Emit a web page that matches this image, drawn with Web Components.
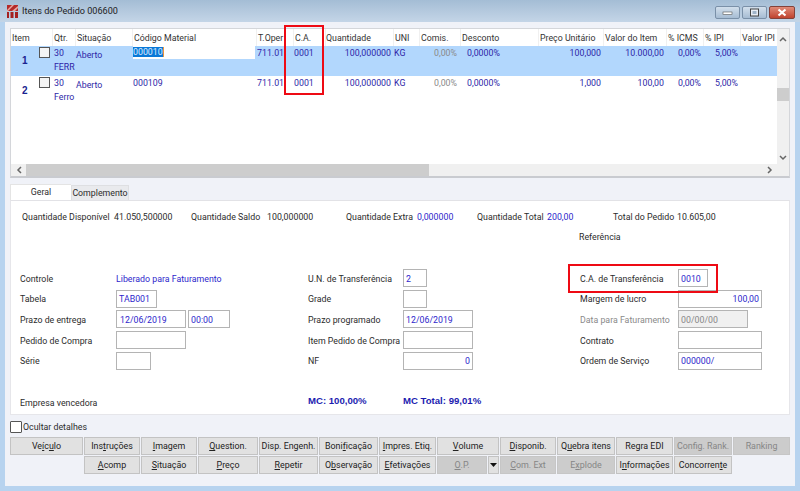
<!DOCTYPE html>
<html lang="pt"><head><meta charset="utf-8"><title>Itens do Pedido</title>
<style>
html,body{margin:0;padding:0;width:800px;height:491px;overflow:hidden}
body{font:8.8px Roboto,"Liberation Sans",Arial,sans-serif;color:#2c2c2c}
</style></head><body>
<erp-window>
  <erp-grid slot="grid"></erp-grid>
  <erp-form slot="form"></erp-form>
  <erp-buttons slot="buttons"></erp-buttons>
</erp-window>
<script>
const FONT='Roboto,"Liberation Sans",Arial,sans-serif';
const BOLD='"Liberation Sans",Arial,sans-serif';
class ErpWindow extends HTMLElement{constructor(){super();this.attachShadow({mode:'open'}).innerHTML=`
<style>
:host{display:flex;flex-direction:column;position:relative;width:800px;height:491px;box-sizing:border-box;background:#b7d3ef;font:8.8px ${FONT};color:#2c2c2c}
.title{height:22px;flex:none;display:flex;align-items:center;padding:0 5px 0 7px;background:linear-gradient(#a4bdd5,#c4d5e7);font-size:9.1px;color:#222;gap:4px}
.title svg{flex:none}
.title span{flex:1}
.wb{display:flex;gap:2px;align-self:flex-start;margin-top:6px}
.wb i{display:flex;align-items:center;justify-content:center;width:25px;height:13px;box-sizing:border-box;border:1px solid #7a90a8;border-radius:2px;background:linear-gradient(#d2dfec,#a6bcd3)}
.wb i.x{width:26px;background:linear-gradient(#e08a78,#c0432f);border-color:#84423a}
.body{flex:1;margin:0 5px 5px;background:#f0f2f8;display:flex;flex-direction:column;padding:6px 5px 0 5px;min-height:0}
.tabs{display:flex;margin-top:6px;height:16px;align-items:flex-end;flex:none}
.tab{box-sizing:border-box;display:flex;align-items:center;justify-content:center}
.t1{width:61px;height:16px;background:#fff;padding-bottom:2px;border-top:1px solid #e4e4e4;border-left:1px solid #e4e4e4}
.t2{width:58px;height:15px;background:#e9eaed;border:1px solid #dedfe2;border-bottom:0}
.check{display:flex;align-items:center;gap:1px;margin-top:6px;height:12px;flex:none}
.check b{width:10px;height:10px;border:1px solid #555;background:#fff;display:block;border-radius:1px}
.red{position:absolute;border:2.5px solid #ee0a14;box-sizing:border-box}
</style>
<div class="title">
<svg width="11" height="13" viewBox="0 0 11 13"><rect width="11" height="6" fill="#b32a2a"/><path d="M0 5 5 0h2L0 7zM5 6l6-5v2L8 6z" fill="#e9a8a0"/><rect x="0" y="7" width="2" height="6" fill="#a52020"/><rect x="3.5" y="7" width="3" height="6" fill="#a52020"/><rect x="8" y="7" width="3" height="6" fill="#a52020"/></svg>
<span>Itens do Pedido 006600</span>
<div class="wb">
<i><svg width="11" height="5"><rect x="1" y="2" width="9" height="2.5" fill="#fff" stroke="#555" stroke-width=".6"/></svg></i>
<i><svg width="11" height="9"><rect x="1.5" y="1" width="8" height="7" fill="#e8eef5" stroke="#444" stroke-width="1"/><rect x="3.5" y="3" width="4" height="3" fill="#9fb4c9"/></svg></i>
<i class="x"><svg width="10" height="9"><path d="M1.5 1.5 8.500 7.500M8.500 1.500 1.500 7.500" stroke="#fff" stroke-width="2.200"/></svg></i>
</div></div>
<div class="body">
<slot name="grid"></slot>
<div class="tabs"><div class="tab t1">Geral</div><div class="tab t2">Complemento</div></div>
<slot name="form"></slot>
<div class="check"><b></b><span>Ocultar detalhes</span></div>
<slot name="buttons"></slot>
</div>
<div class="red" style="left:284px;top:25px;width:40px;height:70px"></div>
<div class="red" style="left:568px;top:264px;width:150px;height:29px"></div>`}}
customElements.define('erp-window',ErpWindow);

const COLS='41px 23px 57px 124px 37px 32px 68px 26px 41px 78px 65px 63px 37px 37px 38px';
class ErpGrid extends HTMLElement{constructor(){super();
const heads=['Item','Qtr.','Situação','Código Material','T.Oper','C.A.','Quantidade','UNI','Comis.','Desconto','Preço Unitário','Valor do Item','% ICMS','% IPI','Valor IPI'];
const row=(sel,n,cod,fam,pu,vi)=>`<div class="row ${sel?'sel':''}">
<div class="c nr"><strong>${n}</strong><i class="cb"></i></div>
<div class="c q"><span>30</span><span class="fam">${fam}</span></div>
<div class="c sit">Aberto</div>
<div class="c cod">${sel?`<span class="edit"><mark>${cod}</mark></span>`:cod}</div>
<div class="c">711.01</div><div class="c">0001</div><div class="c r">100,000000</div><div class="c">KG</div>
<div class="c r gr">0,00%</div><div class="c r2">0,0000%</div><div class="c r">${pu}</div><div class="c r">${vi}</div>
<div class="c r">0,00%</div><div class="c r">5,00%</div><div class="c"></div></div>`;
this.attachShadow({mode:'open'}).innerHTML=`
<style>
:host{display:block;height:150px;flex:none;box-sizing:border-box;background:#fff;border:1px solid #d4d6da;border-bottom:2px solid #c9cbd0;font:8.8px ${FONT}}
.wrap{display:grid;grid-template-columns:1fr 12px;grid-template-rows:1fr 12px;height:100%}
.main{overflow:hidden}
.head,.row{display:grid;grid-template-columns:${COLS}}
.head{height:17px;align-items:center;color:#333}
.head div{padding-left:1px;border-left:1px solid #f0f0f0;height:17px;line-height:19px;white-space:nowrap;overflow:hidden}
.head div:first-child{border:0}
.head div:nth-child(7){padding-left:0}
.row{height:30px;color:#2e1fa8}
.row.sel{background:#b2d7fd}
.c{padding:1px 0 0 1px;white-space:nowrap;position:relative;line-height:12px}
.r{text-align:right;padding-right:2px}
.r2{padding-left:7px}
.gr{color:#8a8a8a;padding-right:3px}
.nr strong{position:absolute;left:11px;top:9px;color:#1a2390;font:bold 10px ${BOLD}}
.cb{position:absolute;left:28px;top:1px;width:9px;height:9px;border:1px solid #555;background:#f4f4f4;display:block}
.q{padding-left:2px;overflow:visible}
.q span{display:block}
.fam{margin-top:2px}
.sit{padding-top:3px;margin-left:0}
.cod{padding-left:1px;padding-top:0}
.edit{display:block;background:#fff;margin-right:1px;height:13px;line-height:13px}
mark{background:#0a78d7;color:#dcecff;box-shadow:1px 0 0 #e8963c}
.row:not(.sel) .cod{padding-top:1px}
.sb{background:#f0f0f0;display:flex;color:#555;position:relative}
.v{flex-direction:column;align-items:center}
.h{align-items:center}
.ar{flex:none;display:flex;align-items:center;justify-content:center}
.v .ar{height:13px;width:12px}.h .ar{width:15px;height:12px}
.thumb{background:#cdcdcd}
.v .thumb{height:13px;width:100%}
.fill{flex:1}
.h .thumb{width:403px;height:100%}
.corner{background:#f0f0f0}
svg{display:block}
</style>
<div class="wrap"><div class="main">
<div class="head">${heads.map(h=>`<div>${h}</div>`).join('')}</div>
${row(1,1,'000010','FERR','100,000','10.000,00')}
${row(0,2,'000109','Ferro','1,000','100,00')}
</div>
<div class="sb v"><div class="ar" style="margin-top:3px"><svg width="8" height="6"><path d="M1 5 4 2l3 3" fill="none" stroke="#666" stroke-width="1.500"/></svg></div><div style="height:43px"></div><div class="thumb"></div><div class="fill"></div><div class="ar"><svg width="8" height="6"><path d="M1 1l3 3 3-3" fill="none" stroke="#666" stroke-width="1.500"/></svg></div></div>
<div class="sb h"><div class="ar"><svg width="6" height="8"><path d="M5 1 2 4l3 3" fill="none" stroke="#666" stroke-width="1.500"/></svg></div><div class="thumb"></div><div class="fill"></div><div class="ar"><svg width="6" height="8"><path d="M1 1l3 3-3 3" fill="none" stroke="#666" stroke-width="1.500"/></svg></div></div>
<div class="corner"></div>
</div>`}}
customElements.define('erp-grid',ErpGrid);

class ErpInput extends HTMLElement{constructor(){super();this.attachShadow({mode:'open'}).innerHTML=`
<style>:host{display:flex;align-items:center;box-sizing:border-box;height:18px;border:1px solid #b4b4b4;background:#fff;padding:1px 2px 0 2px;color:#2e1fcc;white-space:nowrap;overflow:hidden}
:host([right]){justify-content:flex-end}:host([off]){background:#f0f0f0;color:#888}</style><slot></slot>`}}
customElements.define('erp-input',ErpInput);

class ErpForm extends HTMLElement{constructor(){super();this.attachShadow({mode:'open'}).innerHTML=`
<style>
:host{display:block;height:215px;flex:none;box-sizing:border-box;background:#fff;border:1px solid #e6e6ea;border-top:1px solid #e2e2e6;font:8.8px ${FONT};color:#2c2c2c;padding:9px 0 0 0}
.q{display:grid;grid-template-columns:92px 77px 76px 79px 71px 60px 70px 66px 64px auto;padding-left:11px;height:14px;line-height:14px;white-space:nowrap}
.b{color:#2e1fcc}
.ref{margin:6px 0 0 568px;height:14px;line-height:14px}
.f{display:grid;grid-template-columns:96px 192px 95px 177px 98px 84px;grid-auto-rows:18px;row-gap:2.700px;padding-left:9px;margin-top:25px;align-items:center;white-space:nowrap}
.f>span{padding-top:1px}
.p{display:flex;gap:2px}
.off{color:#8a8a8a}
.e{display:grid;grid-template-columns:288px 95px 1fr;padding-left:9px;margin-top:25px;height:14px;line-height:14px}
.e span{padding-top:1px}
strong{color:#1c1cb0;font:bold 9.6px ${BOLD}}
</style>
<div class="q"><span>Quantidade Disponível</span><span>41.050,500000</span><span>Quantidade Saldo</span><span>100,000000</span><span>Quantidade Extra</span><span class="b">0,000000</span><span>Quantidade Total</span><span class="b">200,00</span><span>Total do Pedido</span><span>10.605,00</span></div>
<div class="ref">Referência</div>
<div class="f">
<span>Controle</span><span class="b">Liberado para Faturamento</span><span>U.N. de Transferência</span><erp-input style="width:24px">2</erp-input><span>C.A. de Transferência</span><erp-input style="width:30px">0010</erp-input>
<span>Tabela</span><erp-input style="width:41px">TAB001</erp-input><span>Grade</span><erp-input style="width:24px"></erp-input><span>Margem de lucro</span><erp-input right>100,00</erp-input>
<span>Prazo de entrega</span><div class="p"><erp-input style="width:70px;padding-left:3px">12/06/2019</erp-input><erp-input style="width:42px">00:00</erp-input></div><span>Prazo programado</span><erp-input style="width:70px">12/06/2019</erp-input><span class="off">Data para Faturamento</span><erp-input off style="width:70px">00/00/00</erp-input>
<span>Pedido de Compra</span><erp-input style="width:70px"></erp-input><span>Item Pedido de Compra</span><erp-input style="width:70px"></erp-input><span>Contrato</span><erp-input></erp-input>
<span>Série</span><erp-input style="width:35px"></erp-input><span>NF</span><erp-input right style="width:70px">0</erp-input><span>Ordem de Serviço</span><erp-input>000000/</erp-input>
</div>
<div class="e"><span>Empresa vencedora</span><strong>MC: 100,00%</strong><strong>MC Total: 99,01%</strong></div>`}}
customElements.define('erp-form',ErpForm);

class ErpBtn extends HTMLElement{constructor(){super();this.attachShadow({mode:'open'}).innerHTML=`
<style>:host{display:flex;align-items:center;justify-content:center;box-sizing:border-box;height:18px;background:#e1e1e1;border:1px solid #c3c3c3;color:#222;white-space:nowrap;min-width:0}
:host([off]){background:#cccccc;border-color:#c6c6c6;color:#868686}</style><slot></slot>`}}
customElements.define('erp-btn',ErpBtn);

class ErpButtons extends HTMLElement{constructor(){super();this.attachShadow({mode:'open'}).innerHTML=`
<style>:host{display:grid;grid-template-columns:73px 56px 56px 60px 59px 59px 57px 62px 56px 58px 57px 58px 57px;column-gap:1px;row-gap:1px;margin-top:4px;font:8.9px ${FONT}}
.sp{display:flex;gap:1px}.sp erp-btn:first-child{flex:1}.sp erp-btn:last-child{width:11px}
.sp svg{display:block}
u{text-underline-offset:1px}</style>
<erp-btn>Ve<u>í</u>c<u>u</u>lo</erp-btn><erp-btn>Ins<u>t</u>ruções</erp-btn><erp-btn><u>I</u>magem</erp-btn><erp-btn><u>Q</u>uestion.</erp-btn><erp-btn>Disp. Engenh.</erp-btn><erp-btn>Boni<u>f</u>icação</erp-btn><erp-btn><u>I</u>mpres. Etiq.</erp-btn><erp-btn><u>V</u>olume</erp-btn><erp-btn><u>D</u>isponib.</erp-btn><erp-btn>Q<u>u</u>ebra itens</erp-btn><erp-btn>Regra EDI</erp-btn><erp-btn off>Config. Rank.</erp-btn><erp-btn off>Ranking</erp-btn>
<span></span><erp-btn><u>A</u>comp</erp-btn><erp-btn><u>S</u>ituação</erp-btn><erp-btn><u>P</u>reço</erp-btn><erp-btn><u>R</u>epetir</erp-btn><erp-btn>O<u>b</u>servação</erp-btn><erp-btn><u>E</u>fetivações</erp-btn>
<div class="sp"><erp-btn off><u>O</u>.P.</erp-btn><erp-btn><svg width="7" height="4"><path d="M0 0h7L3.500 4z" fill="#111"/></svg></erp-btn></div>
<erp-btn off><u>C</u>om. Ext</erp-btn><erp-btn off>E<u>x</u>plode</erp-btn><erp-btn>I<u>n</u>formações</erp-btn><erp-btn>Concorren<u>t</u>e</erp-btn>`}}
customElements.define('erp-buttons',ErpButtons);
</script></body></html>
